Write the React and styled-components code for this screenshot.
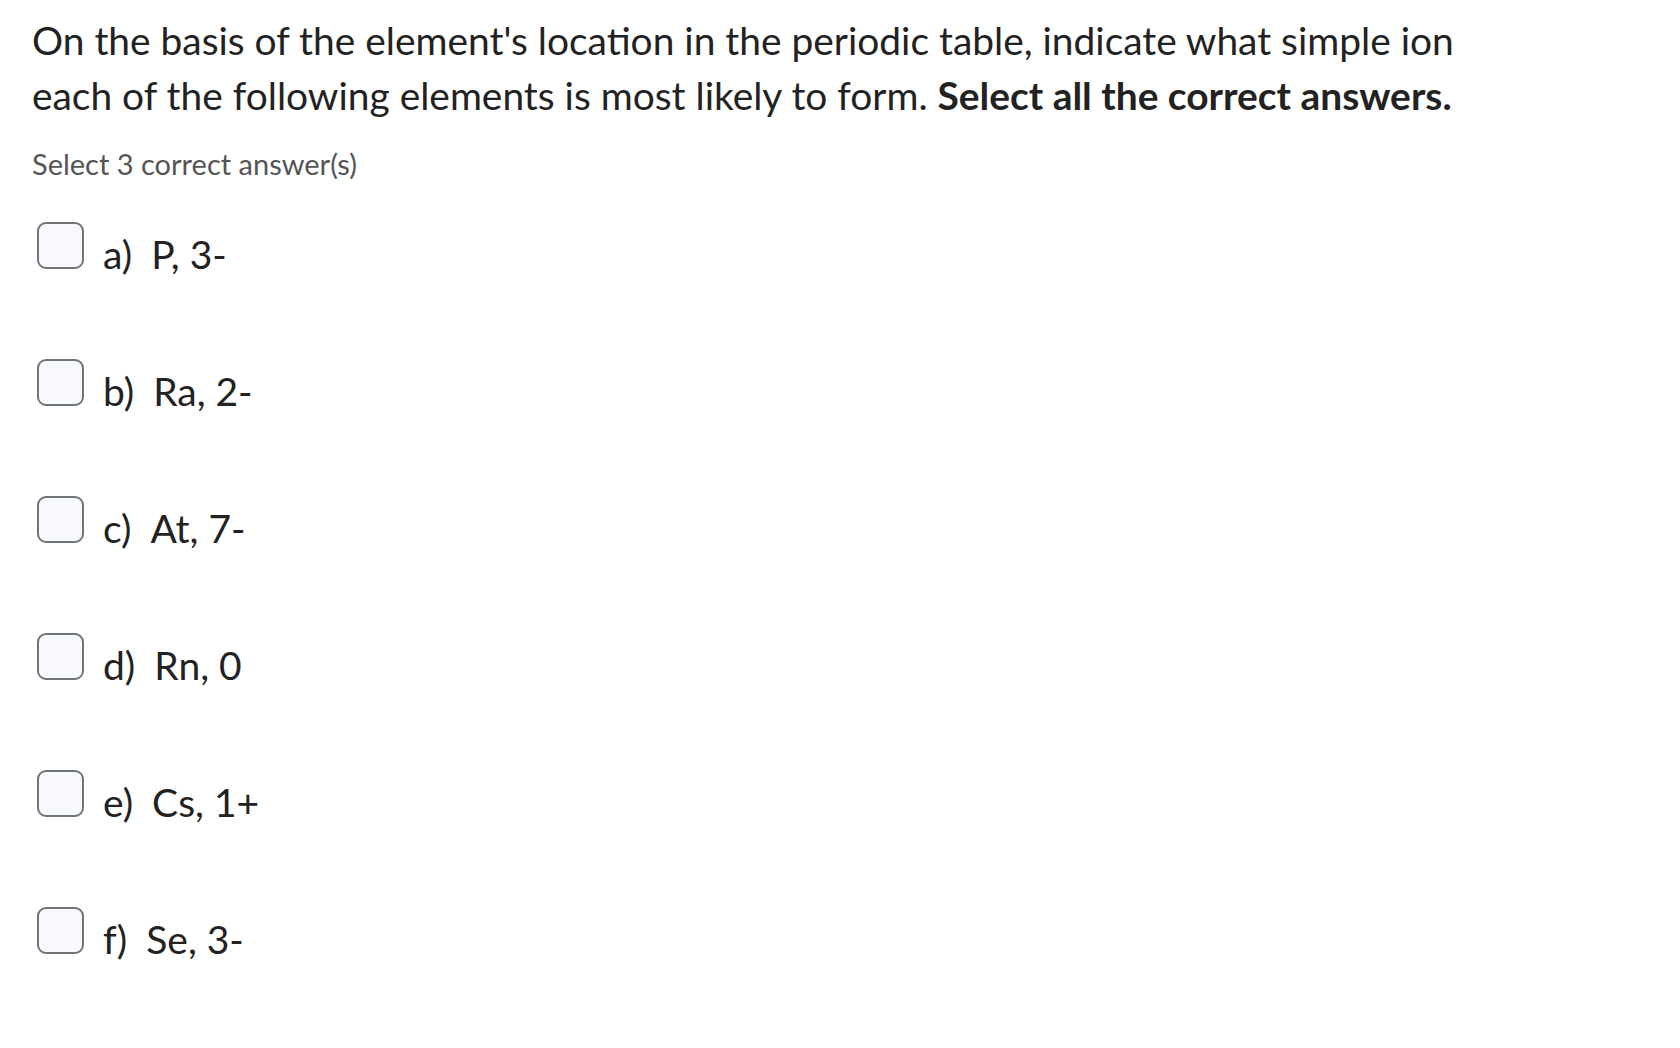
import React from "react";
import styled, { createGlobalStyle } from "styled-components";

const GlobalStyle = createGlobalStyle`
  body {
    margin: 0;
    background: #fff;
    font-family: Lato, "Noto Sans", sans-serif;
    color: #222;
  }
`;

const Page = styled.div`
  padding: 13px 32px 40px 32px;
`;

const Prompt = styled.p`
  margin: 0;
  font-size: 38.9px;
  line-height: 55px;
  max-width: 1460px;
  color: #222;

  strong {
    font-weight: 700;
  }
`;

const Hint = styled.div`
  margin-top: 23px;
  font-size: 29px;
  line-height: 36px;
  color: #555;
`;

const Options = styled.div`
  margin-top: 40px;
  display: flex;
  flex-direction: column;
  gap: 90px;
`;

const Option = styled.label`
  display: flex;
  align-items: center;
  gap: 19px;
  padding-left: 5px;
  cursor: pointer;
`;

const Box = styled.span`
  width: 47px;
  height: 47px;
  box-sizing: border-box;
  border: 2px solid #6f7478;
  border-radius: 9px;
  background: #f8f9fd;
  flex-shrink: 0;
`;

const Text = styled.span`
  font-size: 39px;
  line-height: 47px;
  color: #222;
  transform: translateY(9px);
`;

const Letter = styled.span`
  margin-right: 19px;
`;

const answers = [
  ["a)", "P, 3-"],
  ["b)", "Ra, 2-"],
  ["c)", "At, 7-"],
  ["d)", "Rn, 0"],
  ["e)", "Cs, 1+"],
  ["f)", "Se, 3-"],
];

export default function App() {
  return (
    <>
      <GlobalStyle />
      <Page>
        <Prompt>
          On the basis of the element's location in the periodic table, indicate what simple ion
          each of the following elements is most likely to form. <strong>Select all the correct answers.</strong>
        </Prompt>
        <Hint>Select 3 correct answer(s)</Hint>
        <Options>
          {answers.map(([letter, text]) => (
            <Option key={letter}>
              <Box />
              <Text>
                <Letter>{letter}</Letter>
                {text}
              </Text>
            </Option>
          ))}
        </Options>
      </Page>
    </>
  );
}
